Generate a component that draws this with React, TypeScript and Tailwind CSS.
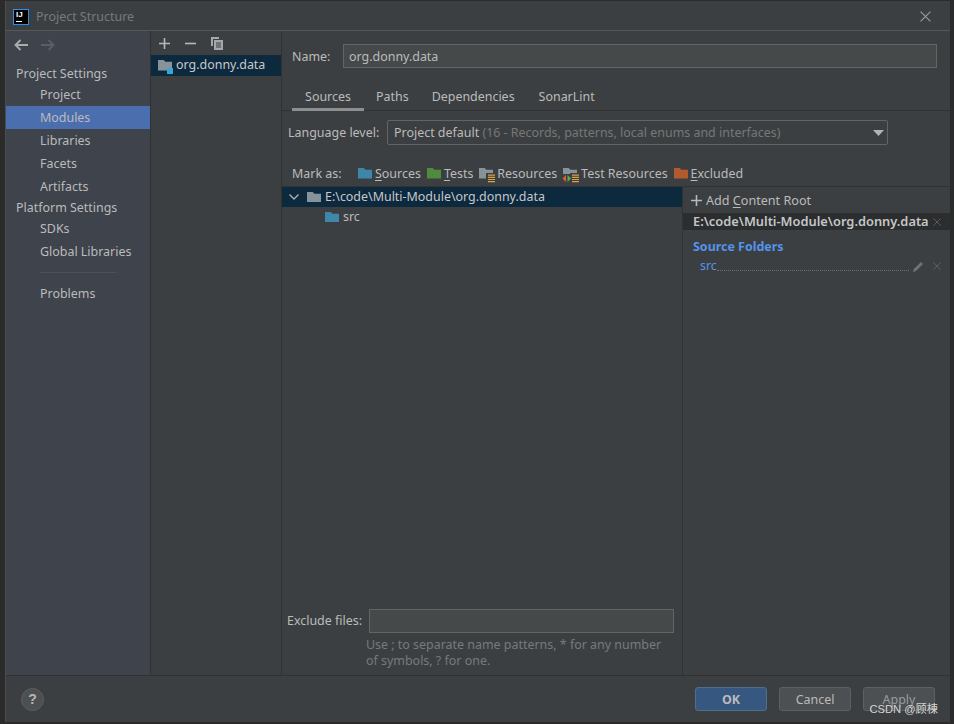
import React from "react";

const F = ({ c, s = 16, cls = "" }: { c: string; s?: number; cls?: string }) => (
  <svg width={s} height={(s * 12) / 16} viewBox="0 0 16 12" className={"shrink-0 " + cls}>
    <path d="M0 0H6.5L8.5 2H16V12H0Z" fill={c} />
  </svg>
);
const Lines = () => (
  <svg width="9" height="10" viewBox="0 0 9 10" className="absolute right-[-2px] bottom-[-4px]">
    <path d="M0 0H9V10H0Z" fill="#3c3f41" />
    <path d="M2 1.5H9V2.7H2ZM2 3.7H9V4.9H2ZM2 5.9H9V7.1H2ZM2 8.1H9V9.3H2Z" fill="#d9a343" />
  </svg>
);
const Arrows = () => (
  <svg width="10" height="9" viewBox="0 0 10 9" className="absolute left-[-1px] bottom-[-4px]">
    <path d="M0 0H10V9H0Z" fill="#3c3f41" />
    <path d="M4 1L0.5 4.5L4 8Z" fill="#d9622b" />
    <path d="M5.5 1L9 4.5L5.5 8Z" fill="#5fa84a" />
  </svg>
);
const U = ({ a, b }: { a: string; b: string }) => (
  <span>
    <span className="underline underline-offset-2">{a}</span>
    {b}
  </span>
);
const Close = ({ s, c, w = 1 }: { s: number; c: string; w?: number }) => (
  <svg width={s} height={s} viewBox="0 0 10 10" className="shrink-0">
    <path d="M0.5 0.5L9.5 9.5M9.5 0.5L0.5 9.5" stroke={c} strokeWidth={w} fill="none" />
  </svg>
);

const side = (t: string, active = false) => (
  <div key={t} className={"h-[23px] pl-[34px] pt-[2px] flex items-center " + (active ? "bg-[#4b6eaf]" : "")}>
    {t}
  </div>
);

export default function App() {
  return (
    <div className="w-[954px] h-[724px] bg-[#2b2b2b] overflow-hidden pt-px pl-[5px] pr-[4px] pb-[2px] text-[12.45px] text-[#bbbbbb] font-['Noto_Sans','Open_Sans',sans-serif]">
      <div className="h-full flex flex-col bg-[#3c3f41] border-l border-[#4a4c4e]">
        <div className="h-[30px] shrink-0 flex items-center border-b border-[#555759] pl-[7px] pr-[19px] pt-[2px]">
          <div className="w-4 h-4 bg-black border border-[#2f8fe8] text-white text-[8px] leading-[8px] font-bold pl-[2px] pt-px font-['Liberation_Sans',sans-serif] shrink-0">
            IJ
            <div className="w-[6px] h-px bg-white mt-[2px]" />
          </div>
          <span className="ml-[7px] pt-[2px] text-[#777a7c]">Project Structure</span>
          <div className="ml-auto">
            <Close s={11} c="#9a9c9e" />
          </div>
        </div>

        <div className="flex-1 flex min-h-0 border-b border-[#2f3133]">
          <div className="w-[145px] shrink-0 bg-[#3e434c] border-r border-[#2f3133]">
            <div className="h-[30px] flex items-center pl-[8px] pb-[2px] gap-[13px]">
              <svg width="14" height="12" viewBox="0 0 14 12"><path d="M14 6H2M6.5 1L1.5 6L6.5 11" stroke="#a9abad" strokeWidth="1.8" fill="none" /></svg>
              <svg width="14" height="12" viewBox="0 0 14 12"><path d="M0 6H12M7.5 1L12.5 6L7.5 11" stroke="#5c5f62" strokeWidth="1.8" fill="none" /></svg>
            </div>
            <div className="h-[22px] pl-[10px] pt-[4px] flex items-center">Project Settings</div>
            {side("Project")}
            {side("Modules", true)}
            {side("Libraries")}
            {side("Facets")}
            {side("Artifacts")}
            <div className="h-[19px] pl-[10px] pt-[2px] flex items-center">Platform Settings</div>
            {side("SDKs")}
            {side("Global Libraries")}
            <div className="ml-[34px] mt-[9px] mb-[9px] h-px bg-[#4e5256] w-[76px]" />
            {side("Problems")}
          </div>

          <div className="w-[131px] shrink-0 border-r border-[#2f3133]">
            <div className="h-[24px] flex items-center pl-[8px]">
              <svg width="11" height="11" viewBox="0 0 11 11"><path d="M5.5 0V11M0 5.5H11" stroke="#b5b7b9" strokeWidth="1.6" /></svg>
              <svg width="11" height="11" viewBox="0 0 11 11" className="ml-[15px]"><path d="M0 5.5H11" stroke="#b5b7b9" strokeWidth="1.6" /></svg>
              <svg width="12" height="13" viewBox="0 0 12 13" className="ml-[15px]"><path d="M0 0H2V9H0ZM0 0H8V2H0Z" fill="#a5a7a9" /><path d="M3 3H12V13H3Z" fill="#a5a7a9" /><path d="M5 6H10M5 8H10M5 10H10" stroke="#3c3f41" strokeWidth="1" /></svg>
            </div>
            <div className="h-[21px] bg-[#0d293e] flex items-center pl-[7px] text-[#c6c8ca] relative">
              <F c="#87939a" s={14} />
              <div className="absolute left-[16px] top-[13px] w-[6px] h-[6px] bg-[#3aa5d8]" />
              <span className="ml-[4px]">org.donny.data</span>
            </div>
          </div>

          <div className="flex-1 min-w-0 flex flex-col">
            <div className="h-[24px] mt-[13px] flex items-center pl-[10px] pr-[13px] shrink-0">
              <span className="w-[51px] pt-[2px]">Name:</span>
              <div className="flex-1 h-[24px] bg-[#45494a] border border-[#646464] pl-[5px] pt-[2px] flex items-center">org.donny.data</div>
            </div>
            <div className="h-[28px] mt-[15px] flex border-b border-[#323232] pl-[10px] shrink-0">
              <div className="w-[72px] h-[28px] border-b-[3px] border-[#8c8e90] pt-[3px] flex items-center justify-center">Sources</div>
              <div className="ml-[12px] h-[28px] pt-[1px] flex items-center">Paths</div>
              <div className="ml-[23px] h-[28px] pt-[1px] flex items-center">Dependencies</div>
              <div className="ml-[24px] h-[28px] pt-[1px] flex items-center">SonarLint</div>
            </div>
            <div className="h-[25px] mt-[9px] flex items-center pl-[6px] shrink-0">
              <span className="w-[99px] pt-[1px]">Language level:</span>
              <div className="w-[501px] h-[25px] border border-[#646464] rounded-[2px] bg-[#3c3f41] flex items-center pl-[6px] pr-[3px]">
                <span className="pt-[2px]">Project default <span className="text-[#777777]">(16 - Records, patterns, local enums and interfaces)</span></span>
                <svg width="11" height="6" viewBox="0 0 11 6" className="ml-auto"><path d="M0 0H11L5.5 6Z" fill="#b0b2b4" /></svg>
              </div>
            </div>
            <div className="h-[22px] mt-[19px] pb-[3px] flex items-center pl-[10px] shrink-0">
              <span className="w-[66px] pt-[2px]">Mark as:</span>
              <F c="#3f87a8" s={14} />
              <span className="ml-[3px] pt-[2px]"><U a="S" b="ources" /></span>
              <F c="#4f8a3f" s={14} cls="ml-[6px]" />
              <span className="ml-[3px] pt-[2px]"><U a="T" b="ests" /></span>
              <span className="relative ml-[6px] shrink-0 flex"><F c="#87939a" s={14} /><Lines /></span>
              <span className="ml-[4px] pt-[2px]">Resources</span>
              <span className="relative ml-[6px] shrink-0 flex"><F c="#87939a" s={14} /><Lines /><Arrows /></span>
              <span className="ml-[4px] pt-[2px]">Test Resources</span>
              <F c="#b25a2e" s={14} cls="ml-[6px]" />
              <span className="ml-[3px] pt-[2px]"><U a="E" b="xcluded" /></span>
            </div>
            <div className="flex-1 min-h-0 flex border-t border-[#323232]">
              <div className="w-[401px] shrink-0 flex flex-col border-r border-[#323232]">
                <div className="h-[20px] bg-[#0d293e] flex items-center pl-[7px] text-[#c6c8ca] shrink-0">
                  <svg width="10" height="6" viewBox="0 0 10 6"><path d="M0.5 0.5L5 5L9.5 0.5" stroke="#b0b2b4" strokeWidth="1.3" fill="none" /></svg>
                  <F c="#87939a" s={14} cls="ml-[8px]" />
                  <span className="ml-[4px]">E:\code\Multi-Module\org.donny.data</span>
                </div>
                <div className="h-[20px] flex items-center pl-[43px] shrink-0">
                  <F c="#3f87a8" s={14} />
                  <span className="ml-[4px]">src</span>
                </div>
                <div className="mt-auto h-[24px] flex items-center pl-[5px] pr-[8px]">
                  <span className="w-[82px]">Exclude files:</span>
                  <div className="flex-1 h-[24px] bg-[#45494a] border border-[#646464]" />
                </div>
                <div className="pl-[84px] pt-[4px] pb-[6px] text-[#777a7c] leading-[16px]">
                  Use ; to separate name patterns, * for any number
                  <br />
                  of symbols, ? for one.
                </div>
              </div>
              <div className="flex-1 min-w-0">
                <div className="h-[26px] flex items-center pl-[8px]">
                  <svg width="11" height="11" viewBox="0 0 11 11"><path d="M5.5 0V11M0 5.5H11" stroke="#b5b7b9" strokeWidth="1.6" /></svg>
                  <span className="ml-[4px] pt-[2px] text-[12.6px]">Add <span className="underline underline-offset-2">C</span>ontent Root</span>
                </div>
                <div className="h-[17px] bg-[#2b2d2e] flex items-center pl-[10px] pr-[9px] pt-[1px] font-semibold text-[12.85px] text-[#c4c6c8] whitespace-nowrap">
                  E:\code\Multi-Module\org.donny.data
                  <span className="ml-auto"><Close s={8} c="#666869" /></span>
                </div>
                <div className="mt-[8px] pl-[10px] font-bold text-[#5394ec] leading-[18px]">Source Folders</div>
                <div className="h-[18px] mt-px flex items-center pl-[17px] pr-[9px] text-[#5394ec]">
                  <span>src</span>
                  <div className="flex-1 border-b border-dotted border-[#6d6f71] self-end mb-[4px]" />
                  <svg width="11" height="11" viewBox="0 0 11 11" className="ml-[4px]"><path d="M0 11L0.8 8L8 1L10 3L3 10Z" fill="#6f7173" /></svg>
                  <span className="ml-[9px]"><Close s={8} c="#666869" /></span>
                </div>
              </div>
            </div>
          </div>
        </div>

        <div className="h-[46px] shrink-0 flex items-center pl-[15px] pr-[15px] relative">
          <div className="w-[23px] h-[23px] rounded-full bg-[#4d5051] border border-[#5b5e5f] flex items-center justify-center font-bold text-[#b5b7b9] text-[14px] font-['Liberation_Sans',sans-serif]">?</div>
          <div className="ml-auto w-[72px] h-[24px] rounded-[3px] bg-[#365880] border border-[#4c708c] pt-[2px] flex items-center justify-center font-bold">OK</div>
          <div className="ml-[12px] w-[72px] h-[24px] rounded-[3px] bg-[#4c5052] border border-[#5e6060] pt-[2px] flex items-center justify-center">Cancel</div>
          <div className="ml-[12px] w-[72px] h-[24px] rounded-[3px] bg-[#4c5052] border border-[#5e6060] pt-[2px] flex items-center justify-center text-[#9a9c9e]">Apply</div>
          <div className="absolute right-[12px] top-[26px] text-[11.2px] text-[#d5d5d5] font-['Liberation_Sans','Noto_Sans_CJK_SC',sans-serif] leading-[14px]">CSDN @顾棟</div>
        </div>
      </div>
    </div>
  );
}
